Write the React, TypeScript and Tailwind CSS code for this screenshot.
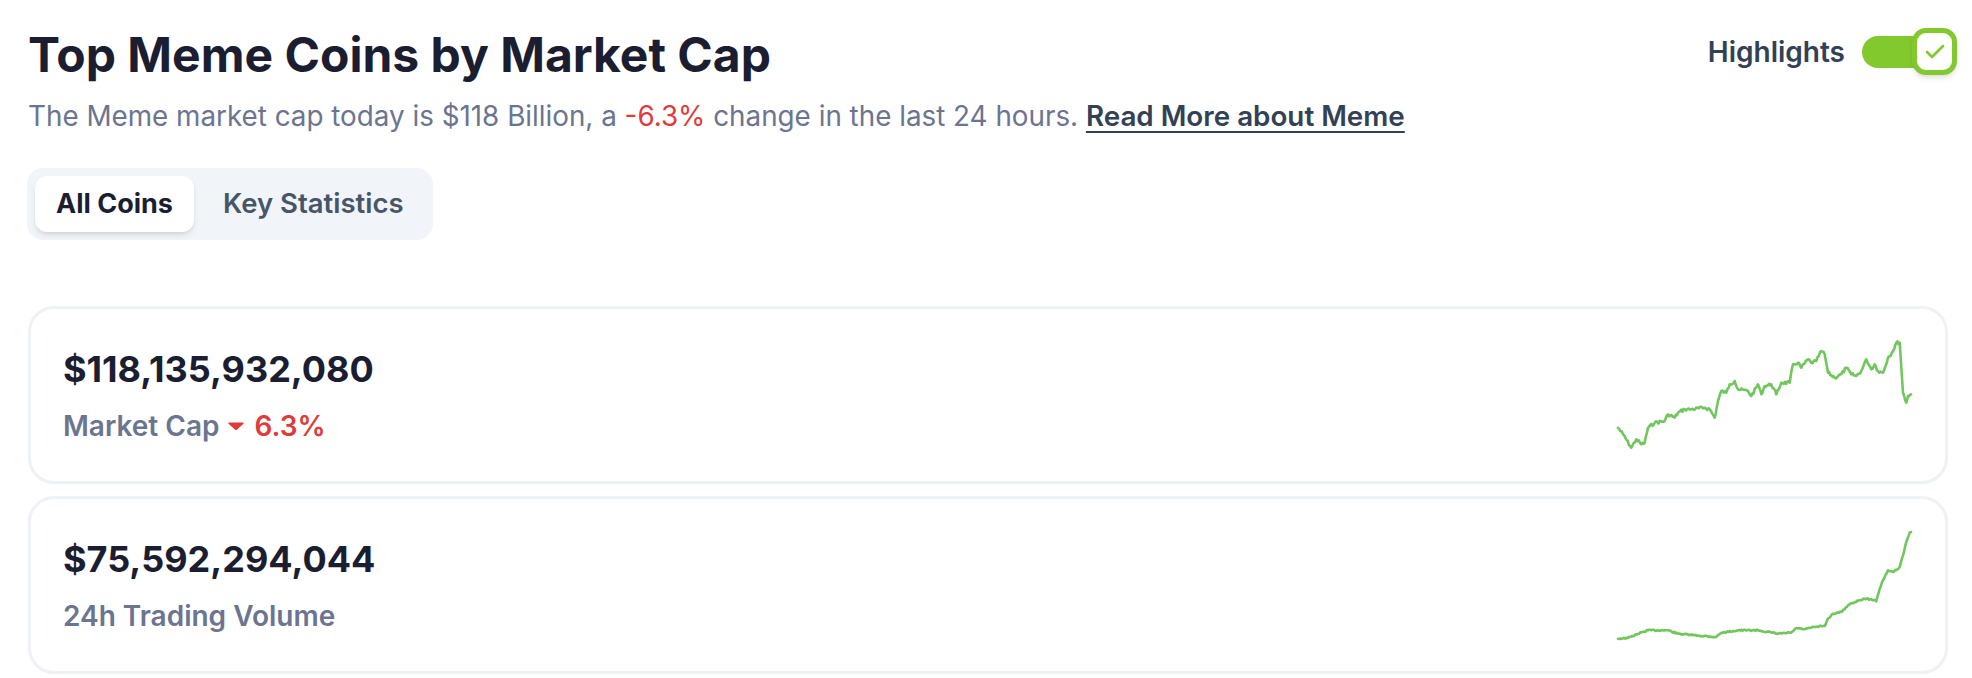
import { Check } from "lucide-react";

type Pt = [number, number];

const marketCapKeys: Pt[] = [
  [0, 86.7], [5, 93.3], [13.3, 106.7], [18.3, 98.3], [23.3, 103.3], [26.7, 101.7],
  [30, 86.7], [36.7, 81.7], [46.7, 80], [50, 73.3], [56.7, 76.7], [60, 71.7],
  [66.7, 68.3], [73.3, 68.3], [86.7, 66.7], [91.7, 68.3], [96.7, 76.7], [100, 60],
  [103.3, 50], [108.3, 51.7], [111.7, 43.3], [116.7, 40], [120, 48.3], [130, 50],
  [133.3, 55], [140, 43.3], [143.3, 53.3], [146.7, 45], [153.3, 43.3], [158.3, 53.3],
  [163.3, 41.7], [171.7, 41.7], [175, 23.3], [180, 21.7], [183.3, 26.7], [190, 18.3],
  [193.3, 21.7], [198.3, 20], [203.3, 10], [206.7, 13.3], [210, 31.7], [216.7, 36.7],
  [223.3, 33.3], [228.3, 26.7], [233.3, 33.3], [238.3, 35], [243.3, 30], [248.3, 18.3],
  [253.3, 28.3], [256.7, 23.3], [260, 30], [265, 31.7], [270, 16.7], [275, 10],
  [278.3, 1.7], [281.7, 1.7], [285, 51.7], [288.3, 61.7], [290, 55], [293, 53.3],
];

const volumeKeys: Pt[] = [
  [0, 107.7], [10, 107], [20, 102.7], [30, 99.3], [50, 99.3], [60, 102.7],
  [76.7, 104.3], [98.3, 106], [103.3, 101.7], [120, 99.3], [140, 99.3], [160, 102.7],
  [173.3, 101.7], [178.3, 97], [186.7, 98.3], [196.7, 96], [206.7, 95], [210, 87.7],
  [215, 82.7], [223.3, 81], [230, 74.3], [236.7, 71], [246.7, 67.7], [253.3, 68.3],
  [258.3, 70.3], [261.7, 57.7], [265, 49.3], [270, 39.3], [275, 41], [281.7, 36],
  [285, 24.3], [288.3, 11], [291.7, 1.7], [293, 1],
];

// fill the gaps between key points with a little deterministic jitter
function buildPath(keys: Pt[], noise: number, seed: number) {
  let s = seed;
  const rand = () => {
    s = (s * 9301 + 49297) % 233280;
    return s / 233280 - 0.5;
  };
  const pts: Pt[] = [];
  for (let i = 0; i < keys.length - 1; i++) {
    const [x0, y0] = keys[i];
    const [x1, y1] = keys[i + 1];
    const steps = Math.max(1, Math.round((x1 - x0) / 1.2));
    for (let k = 0; k < steps; k++) {
      const t = k / steps;
      const jitter = k === 0 ? 0 : rand() * noise;
      pts.push([x0 + (x1 - x0) * t, y0 + (y1 - y0) * t + jitter]);
    }
  }
  pts.push(keys[keys.length - 1]);
  return pts.map(([x, y], i) => `${i ? "L" : "M"}${x.toFixed(1)} ${y.toFixed(1)}`).join(" ");
}

const Sparkline = ({ keys, noise, seed }: { keys: Pt[]; noise: number; seed: number }) => (
  <svg width="296" height="110" viewBox="-1 -1 296 110" className="shrink-0 overflow-visible">
    <path
      d={buildPath(keys, noise, seed)}
      fill="none"
      stroke="#72c65e"
      strokeWidth="2.6"
      strokeLinejoin="round"
      strokeLinecap="round"
    />
  </svg>
);

const StatCard = ({
  value,
  label,
  change,
  chart,
}: {
  value: string;
  label: string;
  change?: string;
  chart: React.ReactNode;
}) => (
  <div className="flex h-[178px] items-center justify-between rounded-[26px] border-[3px] border-[#eef1f5] bg-white pl-[32px] pr-[32px]">
    <div className="flex flex-col gap-[16px]">
      <div className="text-[36px] font-bold leading-[45px] text-[#1a1e30]">{value}</div>
      <div className="flex items-center text-[28px] font-semibold leading-[36px] text-[#6b7590]">
        <span>{label}</span>
        {change && (
          <span className="ml-[8px] flex items-center text-[#e03b3b]">
            <svg width="18" height="10" viewBox="0 0 18 10" className="mr-[9px]">
              <path d="M2 1.5 H16 Q17.5 1.5 16.4 2.8 L10.2 8.6 Q9 9.6 7.8 8.6 L1.6 2.8 Q0.5 1.5 2 1.5 Z" fill="#e03b3b" />
            </svg>
            {change}
          </span>
        )}
      </div>
    </div>
    {chart}
  </div>
);

export default function App() {
  return (
    <div
      className="min-h-screen bg-white pl-[28px] pr-[24px] pt-[26px]"
      style={{ fontFamily: "Inter, 'Noto Sans', sans-serif" }}
    >
      <div className="flex items-start justify-between">
        <div>
          <h1 className="text-[48px] font-bold leading-[58px] text-[#1a1e30]">Top Meme Coins by Market Cap</h1>
          <p className="mt-[14px] text-[27.8px] leading-[36px] text-[#6b7590]">
            The Meme market cap today is $118 Billion, a <span className="text-[#e03b3b]">-6.3%</span> change in
            the last 24 hours.{" "}
            <a className="font-semibold text-[#334155] underline decoration-2 underline-offset-[5px]">
              Read More about Meme
            </a>
          </p>
        </div>
        <div className="mr-[-9px] mt-[2px] flex items-center gap-[17px]">
          <span className="text-[28px] font-semibold leading-[34px] text-[#334155]">Highlights</span>
          <div className="relative h-[47px] w-[95px]">
            <div className="absolute left-0 top-[8px] h-[32px] w-[88px] rounded-full bg-[#82c92e]" />
            <div className="absolute right-0 top-0 flex h-[47px] w-[45px] items-center justify-center rounded-[14px] border-[5px] border-[#82c92e] bg-white shadow-md">
              <Check size={24} strokeWidth={2.6} color="#82c92e" />
            </div>
          </div>
        </div>
      </div>

      <div className="ml-[-1px] mt-[34px] inline-flex gap-[8px] rounded-[16px] bg-[#f1f5f9] p-[8px]">
        <button className="h-[56px] rounded-[12px] bg-white px-[21px] text-[27px] font-bold text-[#1a1e30] shadow-md">
          All Coins
        </button>
        <button className="h-[56px] rounded-[12px] px-[21px] text-[27.5px] font-semibold text-[#475569]">
          Key Statistics
        </button>
      </div>

      <div className="mt-[66px] flex flex-col gap-[12px]">
        <StatCard
          value="$118,135,932,080"
          label="Market Cap"
          change="6.3%"
          chart={<Sparkline keys={marketCapKeys} noise={3.2} seed={7} />}
        />
        <StatCard
          value="$75,592,294,044"
          label="24h Trading Volume"
          chart={<Sparkline keys={volumeKeys} noise={1.4} seed={13} />}
        />
      </div>
    </div>
  );
}
